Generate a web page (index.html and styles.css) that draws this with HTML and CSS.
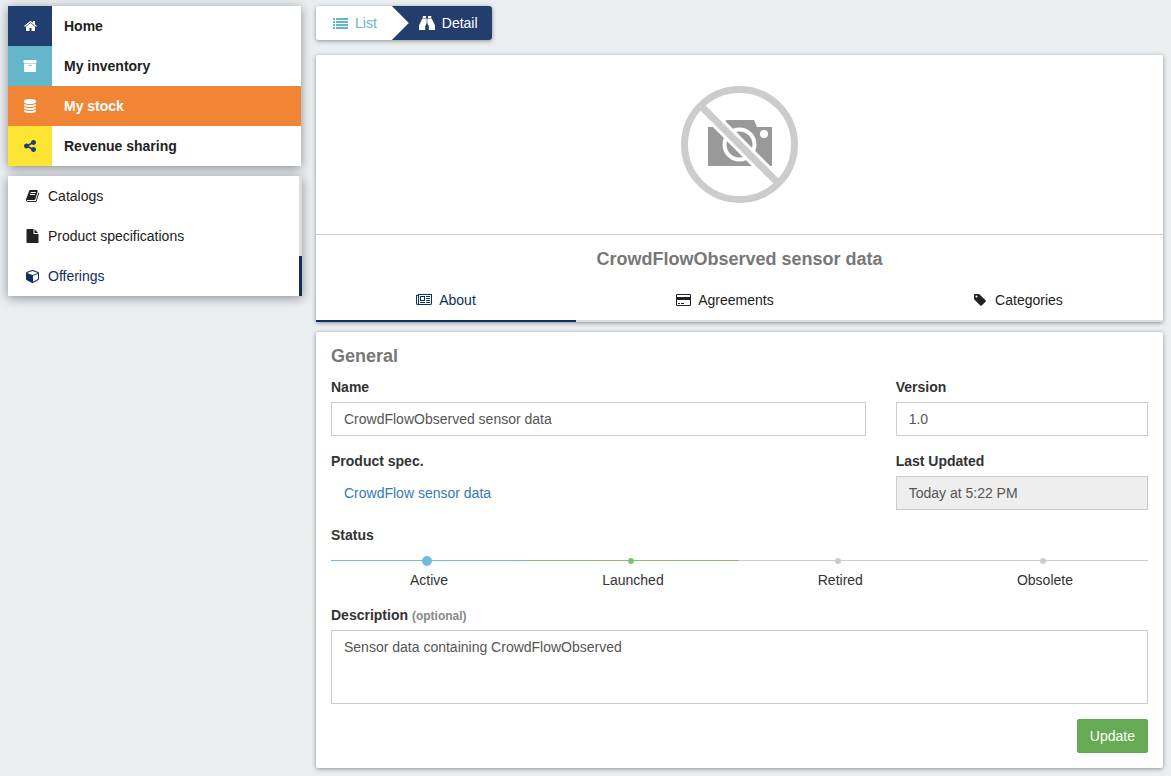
FILE: index.html
```
<!DOCTYPE html>
<html lang="en">
<head>
<meta charset="utf-8">
<meta name="viewport" content="width=device-width, initial-scale=1">
<title>CrowdFlowObserved sensor data</title>
<link rel="stylesheet" href="styles.css">
</head>
<body>
<div class="layout">
  <aside class="sidebar">
    <nav class="menu" aria-label="Main">
      <a class="menu-item" href="#"><span class="menu-icon navy"><svg class="icon" viewBox="0 0 1664 1792" width="13" height="14"><path d="M1408 992v480q0 26-19 45t-45 19H960v-384H704v384H320q-26 0-45-19t-19-45V992q0-1 .5-3t.5-3l575-474 575 474q1 2 1 6zm223-69l-62 74q-8 9-21 11h-3q-13 0-21-7L832 424 140 1001q-12 8-24 7-13-2-21-11l-62-74q-8-10-7-23.500t11-21.500l719-599q32-26 76-26t76 26l244 204V288q0-14 9-23t23-9h192q14 0 23 9t9 23v408l219 182q10 8 11 21.500t-7 23.500z"/></svg></span><span class="menu-text">Home</span></a>
      <a class="menu-item" href="#"><span class="menu-icon teal"><svg class="icon" viewBox="0 0 1792 1792" width="14" height="14"><path d="M1088 832q0-26-19-45t-45-19H768q-26 0-45 19t-19 45 19 45 45 19h256q26 0 45-19t19-45zm576-192v960q0 26-19 45t-45 19H192q-26 0-45-19t-19-45V640q0-26 19-45t45-19h1408q26 0 45 19t19 45zm64-448v256q0 26-19 45t-45 19H128q-26 0-45-19t-19-45V192q0-26 19-45t45-19h1536q26 0 45 19t19 45z"/></svg></span><span class="menu-text">My inventory</span></a>
      <a class="menu-item current" href="#" aria-current="true"><span class="menu-icon"><svg class="icon" viewBox="0 0 1536 1792" width="12" height="14"><path d="M768 768q237 0 443-43t325-127v170q0 69-103 128t-280 93.500-385 34.500-385-34.500T103 896 0 768V598q119 84 325 127t443 43zm0 768q237 0 443-43t325-127v170q0 69-103 128t-280 93.500-385 34.500-385-34.500T103 1664 0 1536v-170q119 84 325 127t443 43zm0-384q237 0 443-43t325-127v170q0 69-103 128t-280 93.500-385 34.500-385-34.500T103 1280 0 1152V982q119 84 325 127t443 43zM768 0q208 0 385 34.500t280 93.500 103 128v128q0 69-103 128t-280 93.500T768 640t-385-34.500T103 512 0 384V256q0-69 103-128t280-93.500T768 0z"/></svg></span><span class="menu-text">My stock</span></a>
      <a class="menu-item" href="#"><span class="menu-icon yellow"><svg class="icon" viewBox="0 0 1536 1792" width="12" height="14"><path d="M1216 1024q133 0 226.500 93.500t93.500 226.500-93.500 226.500-226.500 93.500-226.500-93.500-93.500-226.500q0-12 2-34l-360-180q-92 86-218 86-133 0-226.500-93.500T0 896t93.500-226.500T320 576q126 0 218 86l360-180q-2-22-2-34 0-133 93.500-226.500T1216 128t226.500 93.500T1536 448t-93.500 226.500T1216 768q-126 0-218-86L638 862q2 22 2 34t-2 34l360 180q92-86 218-86z"/></svg></span><span class="menu-text">Revenue sharing</span></a>
    </nav>
    <nav class="submenu" aria-label="My stock">
      <a class="submenu-item" href="#"><svg class="icon" viewBox="0 0 1664 1792" width="13" height="14"><path d="M1639 478q40 57 18 129l-275 906q-19 64-76.500 107.500T1183 1664H260q-77 0-148.500-53.500T12 1479q-24-67-2-127 0-4 3-27t4-37q1-8-3-21.500t-3-19.500q2-11 8-21t16.500-23.500T52 1179q23-38 45-91.500t30-91.500q3-10 .5-30t-.5-28q3-11 17-28t17-23q21-36 42-92t25-90q1-9-2.500-32t.5-28q4-13 22-30.500t22-22.500q19-26 42.500-84.500T340 411q1-8-3-25.500t-2-26.500q2-8 9-18t18-23 17-21q8-12 16.500-30.500t15-35 16-36 19.500-32T469.500 140t36-11.500T553 134l-1 3q38-9 51-9h761q74 0 114 56t18 130l-274 906q-36 119-71.500 153.500T1022 1408H153q-27 0-38 15-11 16-1 43 24 70 144 70h923q29 0 56-15.500t35-41.500l300-987q7-22 5-57 38 15 59 43zm-1064 2q-4 13 2 22.500t20 9.500h608q13 0 25.500-9.500T1247 480l21-64q4-13-2-22.500t-20-9.500H638q-13 0-25.500 9.500T596 416zm-83 256q-4 13 2 22.500t20 9.500h608q13 0 25.500-9.500T1164 736l21-64q4-13-2-22.500t-20-9.500H555q-13 0-25.500 9.500T513 672z"/></svg>Catalogs</a>
      <a class="submenu-item" href="#"><svg class="icon" viewBox="-64 0 1664 1792" width="13" height="14"><path d="M1024 512V40q22 14 36 28l408 408q14 14 28 36h-472zm-128 32q0 40 28 68t68 28h544v1056q0 40-28 68t-68 28H96q-40 0-68-28t-28-68V96q0-40 28-68t68-28h800v544z"/></svg>Product specifications</a>
      <a class="submenu-item selected" href="#" aria-current="page"><svg class="icon" viewBox="0 0 1664 1792" width="13" height="14"><path d="M896 1629l640-349v-636l-640 233v752zm-64-865l698-254-698-254-698 254 698 254zm832-252v768q0 35-18 65t-49 47l-704 384q-28 16-61 16t-61-16l-704-384q-31-17-49-47t-18-65v-768q0-40 23-73t61-47l704-256q22-8 44-8t44 8l704 256q38 14 61 47t23 73z"/></svg>Offerings</a>
    </nav>
  </aside>
  <main class="content">
    <nav class="steps" aria-label="View">
      <a class="step step-list" href="#"><svg class="icon" viewBox="0 0 15 14" width="15" height="14"><path d="M0 2h2v2H0zM3 2h12v2H3zM0 5h2v2H0zM3 5h12v2H3zM0 8h2v2H0zM3 8h12v2H3zM0 11h2v2H0zM3 11h12v2H3z"/></svg>List</a>
      <a class="step step-detail" href="#" aria-current="page"><svg class="icon" viewBox="0 0 16 16" width="16" height="16"><path d="M3.800 1h3.200v2H3.800zM9 1h3.200v2H9zM3.300 3.400h3.900V9.500L6.200 11v4H.3q-.3 0-.3-.3V10.500zM12.700 3.400H8.800V9.500l1 1.500v4h5.900q.3 0 .3-.3V10.500zM7.500 3.800h1v4.700h-1z"/></svg>Detail</a>
    </nav>
    <section class="card">
      <div class="picture">
        <svg viewBox="0 0 117 117" width="117" height="117" role="img" aria-label="No image available">
          <path class="camera" d="M27 41h16l2-7h28l3 7h15v39H27z"/>
          <circle class="lens" cx="58.500" cy="58.500" r="15"/>
          <circle class="flash" cx="83" cy="48" r="4"/>
          <path class="gap" d="M21 21l75 75"/>
          <path class="ban" d="M21 21l75 75"/>
          <circle class="ban" cx="58.500" cy="58.500" r="55"/>
        </svg>
      </div>
      <h1 class="product-name">CrowdFlowObserved sensor data</h1>
      <nav class="tabs" aria-label="Sections">
        <a class="tab active" href="#" aria-current="true"><svg class="icon" viewBox="0 0 2048 1792" width="16" height="14"><path d="M1024 512H640v384h384V512zm128 640v128H512v-128h640zm0-768v640H512V384h640zm640 768v128h-512v-128h512zm0-256v128h-512V896h512zm0-256v128h-512V640h512zm0-256v128h-512V384h512zM256 1344V384H128v960q0 26 19 45t45 19 45-19 19-45zm1664 0V256H384v1088q0 33-11 64h1483q26 0 45-19t19-45zm128-1216v1216q0 80-56 136t-136 56H192q-80 0-136-56T0 1344V256h256V128h1792z"/></svg>About</a>
        <a class="tab" href="#"><svg class="icon" viewBox="0 0 1920 1792" width="15" height="14"><path d="M1760 128q66 0 113 47t47 113v1216q0 66-47 113t-113 47H160q-66 0-113-47T0 1504V288q0-66 47-113t113-47h1600zM160 256q-13 0-22.500 9.500T128 288v224h1664V288q0-13-9.500-22.500T1760 256H160zm1600 1280q13 0 22.500-9.500t9.500-22.500V896H128v608q0 13 9.500 22.500t22.500 9.500h1600zM256 1408v-128h256v128H256zm384 0v-128h384v128H640z"/></svg>Agreements</a>
        <a class="tab" href="#"><svg class="icon" viewBox="0 0 1792 1792" width="14" height="14"><path d="M448 448q0-53-37.500-90.500t-90.500-37.500-90.500 37.500-37.500 90.500 37.500 90.500 90.500 37.500 90.500-37.500 37.500-90.500zm1067 576q0 53-37 90l-491 492q-39 37-91 37-53 0-90-37l-715-716q-38-37-64.500-101t-26.500-117v-416q0-52 38-90t90-38h416q53 0 117 26.500t102 64.500l715 714q37 39 37 91z"/></svg>Categories</a>
      </nav>
    </section>
    <section class="card panel">
      <h2 class="panel-title">General</h2>
      <form>
        <div class="row">
          <div class="field wide">
            <label for="name">Name</label>
            <input class="control" id="name" type="text" value="CrowdFlowObserved sensor data">
          </div>
          <div class="field narrow">
            <label for="version">Version</label>
            <input class="control" id="version" type="text" value="1.0">
          </div>
        </div>
        <div class="row">
          <div class="field wide">
            <span class="label">Product spec.</span>
            <a class="spec-link" href="#">CrowdFlow sensor data</a>
          </div>
          <div class="field narrow">
            <label for="updated">Last Updated</label>
            <input class="control" id="updated" type="text" value="Today at 5:22 PM" readonly>
          </div>
        </div>
        <span class="label">Status</span>
        <ol class="status">
          <li class="stage stage-active">Active</li>
          <li class="stage stage-next">Launched</li>
          <li class="stage">Retired</li>
          <li class="stage">Obsolete</li>
        </ol>
        <label for="description">Description <span class="optional">(optional)</span></label>
        <textarea class="control area" id="description">Sensor data containing CrowdFlowObserved</textarea>
        <div class="actions"><button class="update" type="submit">Update</button></div>
      </form>
    </section>
  </main>
</div>
</body>
</html>
```
FILE: styles.css
```
* { box-sizing: border-box; }

body {
  margin: 0;
  background: #eaeef1;
  color: #333;
  font: 14px/20px "Liberation Sans", Arial, sans-serif;
}

a { color: inherit; text-decoration: none; }

.icon { display: block; flex: none; fill: currentColor; }

.layout {
  display: grid;
  grid-template-columns: 293px minmax(0, 1fr);
  gap: 15px;
  padding: 6px 8px 8px;
}

.sidebar {
  display: flex;
  flex-direction: column;
  gap: 10px;
}

.menu, .submenu { box-shadow: 0 2px 10px rgba(0, 0, 0, .4); }

.menu { background: #fff; }

.menu-item {
  display: flex;
  align-items: center;
  height: 40px;
  color: #222;
  font-weight: bold;
}
.menu-item.current { background: #f18536; color: #fff; }

.menu-icon {
  display: flex;
  align-items: center;
  justify-content: center;
  width: 44px;
  height: 40px;
  color: #fff;
}
.navy { background: #203e6f; }
.teal { background: #64b6c9; }
.yellow { background: #fce532; color: #203e6f; }

.menu-text { padding-left: 12px; }

.submenu { margin-right: -1px; background: #fff; }

.submenu-item {
  display: flex;
  align-items: center;
  gap: 9px;
  height: 40px;
  padding-left: 18px;
  border-right: 3px solid #dcddde;
  color: #222;
}
.submenu-item.selected { border-color: #0f2e63; color: #0f2e63; }

.content { min-width: 0; }

.steps {
  display: flex;
  width: max-content;
  margin-bottom: 15px;
  border-radius: 3px;
  box-shadow: 0 1px 4px rgba(0, 0, 0, .4);
}

.step {
  display: flex;
  align-items: center;
  gap: 7px;
  height: 34px;
}
.step-list {
  position: relative;
  padding: 0 15px 0 17px;
  border-radius: 3px 0 0 3px;
  background: #fff;
  color: #64b6c9;
}
.step-list::after {
  content: "";
  position: absolute;
  top: 0;
  left: 100%;
  width: 17px;
  height: 34px;
  background: #fff;
  clip-path: polygon(0 0, 100% 50%, 0 100%);
}
.step-detail {
  padding: 0 14px 0 27px;
  border-radius: 0 3px 3px 0;
  background: #233e6d;
  color: #fff;
}

.card {
  border-radius: 2px;
  background: #fff;
  box-shadow: 0 1px 4px rgba(0, 0, 0, .4);
}

.picture {
  display: flex;
  align-items: center;
  justify-content: center;
  height: 180px;
  border-bottom: 1px solid #ccc;
}
.camera { fill: #999; }
.lens { fill: #999; stroke: #fff; stroke-width: 4; }
.flash { fill: #fff; }
.gap { stroke: #fff; stroke-width: 13; }
.ban { fill: none; stroke: #ccc; stroke-width: 7; }

.product-name {
  margin: 0;
  padding: 14px 15px 11px;
  color: #777;
  font-size: 18px;
  line-height: 20px;
  text-align: center;
}

.tabs { display: flex; }

.tab {
  display: flex;
  flex: 1 1 auto;
  align-items: center;
  justify-content: center;
  gap: 7px;
  height: 42px;
  border-bottom: 2px solid #ddd;
  color: #222;
}
.tab.active { border-color: #0f2e63; color: #0f2e63; }

.panel { margin-top: 10px; padding: 14px 15px 15px; }

.panel-title {
  margin: 0 0 11px;
  color: #777;
  font-size: 18px;
  line-height: 20px;
}

.row { display: flex; margin: 0 -15px 15px; }
.field { padding: 0 15px; }
.wide { width: 66.6667%; }
.narrow { width: 33.3333%; }

label, .label {
  display: block;
  margin-bottom: 5px;
  font-weight: bold;
}
.optional { color: #888; font-size: 12px; line-height: 12px; }

.control {
  display: block;
  width: 100%;
  height: 34px;
  padding: 6px 12px;
  border: 1px solid #ccc;
  border-radius: 0;
  background: #fff;
  color: #555;
  font: inherit;
}
.control:read-only { background: #eee; }
.area { height: 74px; resize: none; }

.spec-link {
  display: block;
  padding: 7px 13px;
  color: #337ab7;
}

.status {
  display: flex;
  margin: 0 0 15px;
  padding: 10px 0 0;
  list-style: none;
}
.stage {
  position: relative;
  flex: 1 1 auto;
  padding: 9px 0 0 4px;
  border-top: 1px solid #ccc;
  text-align: center;
}
.stage::before {
  content: "";
  position: absolute;
  top: -3px;
  left: calc(50% - 3px);
  width: 6px;
  height: 6px;
  border-radius: 50%;
  background: #ccc;
}
.stage-active { border-color: #6fbcdb; }
.stage-active::before {
  top: -5px;
  left: calc(50% - 5px);
  width: 10px;
  height: 10px;
  background: #6fbcdb;
}
.stage-next { border-color: #87bf77; }
.stage-next::before { background: #87bf77; }

.actions { display: flex; justify-content: flex-end; margin-top: 15px; }

.update {
  height: 34px;
  padding: 0 13px;
  border: 0;
  border-radius: 2px;
  background: #66ab54;
  color: #fff;
  font: inherit;
}
```
